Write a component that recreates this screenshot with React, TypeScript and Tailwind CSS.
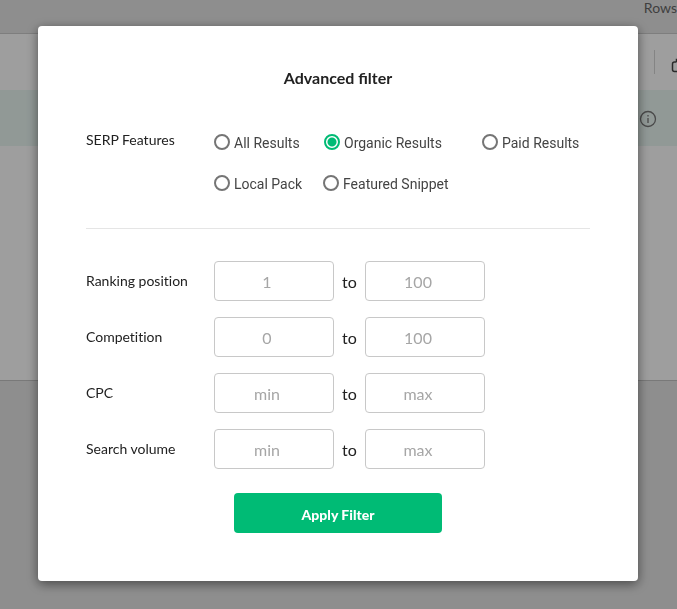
import React, { useState } from 'react';

const FEATURES = [
  [
    { label: 'All Results', width: 'w-[110px]' },
    { label: 'Organic Results', width: 'w-[158px]' },
    { label: 'Paid Results', width: '' },
  ],
  [
    { label: 'Local Pack', width: 'w-[109px]' },
    { label: 'Featured Snippet', width: '' },
  ],
];

const RANGES = [
  { label: 'Ranking position', from: '1', to: '100' },
  { label: 'Competition', from: '0', to: '100' },
  { label: 'CPC', from: 'min', to: 'max' },
  { label: 'Search volume', from: 'min', to: 'max' },
];

const RangeInput: React.FC<{ id?: string; label: string; placeholder: string }> = ({ id, label, placeholder }) => (
  <input
    id={id}
    type="text"
    inputMode="numeric"
    aria-label={label}
    placeholder={placeholder}
    className="h-10 w-30 rounded border border-[#c8c8c8] bg-white pl-1 pr-[18px] text-center text-base text-[#212121] placeholder:text-[#a6a6a6] outline-none focus:border-[#00bb75]"
  />
);

const ResultsPage: React.FC = () => (
  <div className="flex min-h-screen flex-col bg-[#e6e6e6] text-[#666]">
    <div className="flex h-[34px] justify-end border-b border-[#cccccc]">
      <span className="text-sm leading-4">Rows</span>
    </div>
    <div className="flex h-14 items-center justify-end overflow-hidden bg-white">
      <div className="h-6 w-px bg-[#d5d5d5]" />
      <svg className="-mr-3 ml-[14px] mt-2 h-5 w-5 shrink-0" viewBox="0 0 20 20" fill="none" stroke="#444" strokeWidth="1.5">
        <path d="M7.500 6H5.500Q3.500 6 3.500 8v5.500q0 2 2 2H16V6h-4M7.500 6V3.500h9" />
      </svg>
    </div>
    <div className="flex h-14 items-center justify-end bg-[#eaf7f3] pr-5">
      <svg className="mt-0.5 h-[18px] w-[18px]" viewBox="0 0 18 18" fill="none" stroke="#777" strokeWidth="1.300">
        <circle cx="9" cy="9" r="7.500" />
        <path d="M9 8v5M9 5v1.500" />
      </svg>
    </div>
    <div className="h-[235px] border-b border-[#c4c4c4] bg-white" />
  </div>
);

export default function App() {
  const [feature, setFeature] = useState('Organic Results');

  return (
    <div className="font-['Lato',sans-serif]">
      <ResultsPage />
      <div className="fixed inset-0 flex items-start justify-center overflow-auto bg-black/38 pt-[26px] pr-px">
        <form
          role="dialog"
          aria-labelledby="filter-title"
          onSubmit={(e) => e.preventDefault()}
          className="w-full max-w-[600px] rounded bg-white px-12 pt-10 pb-12 text-[#212121] shadow-[0_3px_12px_rgba(0,0,0,0.5)]"
        >
          <h2 id="filter-title" className="text-center text-base leading-6 font-bold">Advanced filter</h2>

          <fieldset className="mt-10 flex border-b border-[#e5e5e5] pb-[34px]" aria-labelledby="serp-features">
            <span id="serp-features" className="w-32 shrink-0 text-sm leading-5">SERP Features</span>
            <div className="flex grow flex-col gap-[21px] pt-[3px] font-['Roboto',sans-serif] text-sm leading-5 text-[#444]">
              {FEATURES.map((row, i) => (
                <div key={i} className="flex">
                  {row.map(({ label, width }) => (
                    <div key={label} className={width}>
                      <label className="flex w-fit items-start gap-1">
                        <input
                          type="radio"
                          name="feature"
                          checked={feature === label}
                          onChange={() => setFeature(label)}
                          className="mt-px h-4 w-4 appearance-none rounded-full border-2 border-[#757575] checked:border-[#00bb75] checked:bg-[radial-gradient(circle,#00bb75_4px,transparent_5px)]"
                        />
                        {label}
                      </label>
                    </div>
                  ))}
                </div>
              ))}
            </div>
          </fieldset>

          <div className="mt-8 flex flex-col gap-4">
            {RANGES.map(({ label, from, to }, i) => (
              <div key={label} className="flex h-10">
                <label htmlFor={`range-${i}`} className="w-32 shrink-0 pt-[10px] text-sm leading-5 [font-variant-ligatures:none]">{label}</label>
                <RangeInput id={`range-${i}`} label={`${label} from`} placeholder={from} />
                <span className="w-[31px] pt-[9px] text-center text-base leading-6">to</span>
                <RangeInput label={`${label} to`} placeholder={to} />
              </div>
            ))}
          </div>

          <button type="submit" className="mx-auto mt-6 block h-10 w-52 rounded bg-[#00bb75] pt-1 text-sm font-black text-white">
            Apply Filter
          </button>
        </form>
      </div>
    </div>
  );
}
